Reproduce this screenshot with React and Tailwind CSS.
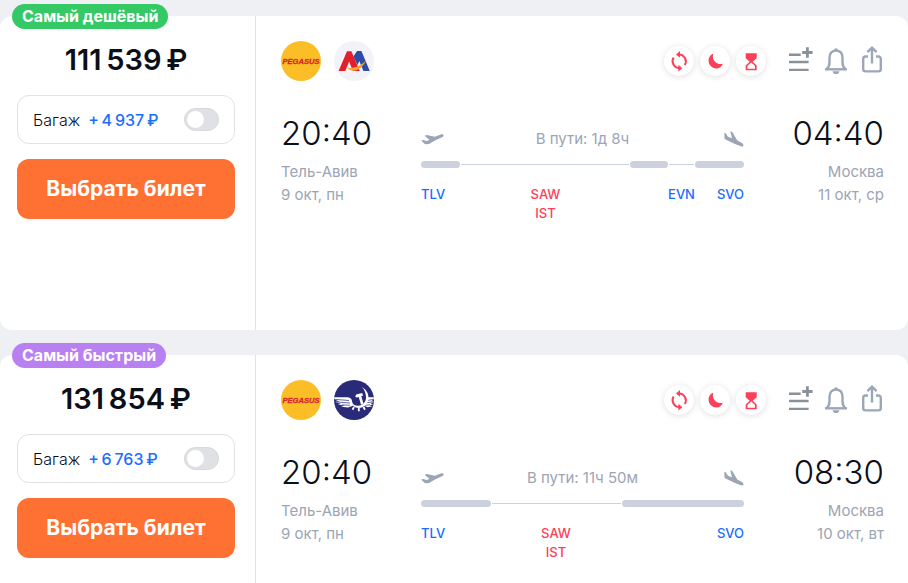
import React, { useState } from 'react';

const tickets = [
  {
    id: 'cheapest',
    label: 'Самый дешёвый',
    labelColor: 'bg-[#35c966]',
    price: '111\u2009539\u2009₽',
    baggage: '+\u20094\u2009937\u2009₽',
    airlines: ['pegasus', 'armenian'],
    from: { time: '20:40', city: 'Тель-Авив', date: '9 окт, пн' },
    to: { time: '04:40', city: 'Москва', date: '11 окт, ср' },
    duration: 'В пути: 1д 8ч',
    // flights and layovers alternate, weight is the share of the whole trip
    legs: [
      { type: 'flight', weight: 39, codes: ['TLV'], align: 'start' },
      { type: 'stop', weight: 171, codes: ['SAW', 'IST'], change: true },
      { type: 'flight', weight: 38 },
      { type: 'stop', weight: 25, codes: ['EVN'] },
      { type: 'flight', weight: 50, codes: ['SVO'], align: 'end' },
    ],
  },
  {
    id: 'fastest',
    label: 'Самый быстрый',
    labelColor: 'bg-[#b980f2]',
    price: '131\u2009854\u2009₽',
    baggage: '+\u20096\u2009763\u2009₽',
    airlines: ['pegasus', 'aeroflot'],
    from: { time: '20:40', city: 'Тель-Авив', date: '9 окт, пн' },
    to: { time: '08:30', city: 'Москва', date: '10 окт, вт' },
    duration: 'В пути: 11ч 50м',
    legs: [
      { type: 'flight', weight: 70, codes: ['TLV'], align: 'start' },
      { type: 'stop', weight: 130, codes: ['SAW', 'IST'], change: true },
      { type: 'flight', weight: 123, codes: ['SVO'], align: 'end' },
    ],
  },
];

const App = () => (
  <div className="min-h-screen bg-[#eff0f4] pt-4 pb-6 font-['Inter',sans-serif] text-[#0b0f19]">
    <main className="flex flex-col gap-[25px]">
      {tickets.map((ticket) => (
        <TicketCard key={ticket.id} ticket={ticket} />
      ))}
    </main>
  </div>
);

const TicketCard = ({ ticket }) => {
  const [withBaggage, setWithBaggage] = useState(false);

  return (
    <article className="relative flex min-h-[314px] rounded-xl bg-white">
      <span className={`absolute -top-3 left-3 rounded-full px-[10px] text-base leading-[25px] font-bold text-white ${ticket.labelColor}`}>
        {ticket.label}
      </span>

      {/* Price and purchase */}
      <div className="w-64 shrink-0 border-r border-[#dfe2e6] pt-6 pr-5 pl-[17px]">
        <div className="text-center text-[29px] leading-10 font-semibold">{ticket.price}</div>
        <label className="mt-[15px] flex h-[49px] items-center justify-between rounded-xl border border-[#e0e2e5] px-[15px] text-base">
          <span className="flex gap-2 leading-6">
            <span className="font-light">Багаж</span>
            <span className="font-medium text-[#1a6dff]">{ticket.baggage}</span>
          </span>
          <input
            type="checkbox"
            checked={withBaggage}
            onChange={(e) => setWithBaggage(e.target.checked)}
            className="flex h-[23px] w-[35px] appearance-none items-center rounded-full border border-[#d5d8dc] bg-[#dfe1e5] px-[2px] before:size-[17px] before:rounded-full before:bg-white checked:justify-end checked:bg-[#1a6dff]"
          />
        </label>
        <button className="mt-[15px] h-[60px] w-full rounded-xl bg-[#ff7033] text-[21px] font-bold text-white">
          Выбрать билет
        </button>
      </div>

      {/* Flight details */}
      <div className="min-w-0 flex-1 pt-[25px] pr-6 pl-[25px]">
        <div className="flex items-center justify-between">
          <div className="flex gap-[13px]">
            {ticket.airlines.map((airline) => (
              <AirlineLogo key={airline} name={airline} />
            ))}
          </div>
          <div className="flex items-center">
            <div className="mr-[22px] flex gap-[6px]">
              <Warning><ChangeIcon /></Warning>
              <Warning><MoonIcon /></Warning>
              <Warning><HourglassIcon /></Warning>
            </div>
            <div className="flex gap-3">
              <IconButton label="Добавить в список"><ListPlusIcon /></IconButton>
              <IconButton label="Следить за ценой"><BellIcon /></IconButton>
              <IconButton label="Поделиться"><ShareIcon /></IconButton>
            </div>
          </div>
        </div>

        <div className="mt-[30px] flex">
          <Endpoint point={ticket.from} />
          <Route duration={ticket.duration} legs={ticket.legs} />
          <Endpoint point={ticket.to} right />
        </div>
      </div>
    </article>
  );
};

const Endpoint = ({ point, right }) => (
  <div className={`w-[140px] shrink-0 ${right ? 'text-right' : ''}`}>
    <div className="text-[33px] leading-11 font-light">{point.time}</div>
    <div className="mt-[5px] text-[15px] leading-[23px] text-[#9ba5b4]">
      <div>{point.city}</div>
      <div>{point.date}</div>
    </div>
  </div>
);

const Route = ({ duration, legs }) => (
  <div className="min-w-0 flex-1 pt-4">
    <div className="flex h-6 items-center justify-between text-[15px] text-[#9ba5b4]">
      <TakeoffIcon />
      <span>{duration}</span>
      <LandingIcon />
    </div>
    <div className="mt-[10px] flex h-[7px] items-center">
      {legs.map((leg, i) => (
        <div
          key={i}
          className={leg.type === 'flight' ? 'h-[7px] rounded-full bg-[#ccd2dd]' : 'h-px border-x border-white bg-[#ccd2dd]'}
          style={{ flex: `${leg.weight} 1 0px` }}
        />
      ))}
    </div>
    <div className="mt-[17px] flex text-[13px] leading-[19px] font-medium">
      {legs.map((leg, i) => (
        <div
          key={i}
          className={`flex min-w-0 flex-col ${leg.align === 'start' ? 'items-start' : leg.align === 'end' ? 'items-end' : 'items-center'} ${leg.change ? 'text-[#fb4058]' : 'text-[#1a6dff]'}`}
          style={{ flex: `${leg.weight} 1 0px` }}
        >
          {leg.codes?.map((code) => <span key={code}>{code}</span>)}
        </div>
      ))}
    </div>
  </div>
);

const Warning = ({ children }) => (
  <span className="flex size-[30px] items-center justify-center rounded-full bg-white text-[#fb4058] shadow-[0_1px_6px_rgba(0,0,0,0.13)]">
    {children}
  </span>
);

const IconButton = ({ label, children }) => (
  <button aria-label={label} className="flex size-6 items-center justify-center text-[#9ba7b7]">
    {children}
  </button>
);

const ChangeIcon = () => (
  <svg className="size-[30px]" viewBox="0 0 30 30" fill="none" stroke="currentColor" strokeWidth="2">
    <path d="M15 8.4a7 7 0 0 1 5.8 10.6" />
    <path d="M15.4 22.2a7 7 0 0 1-5.8-10.6" />
    <path d="M16 5v6.8L12 8.4zM14.4 18.8v6.8l4-3.4z" fill="currentColor" stroke="none" />
  </svg>
);

const MoonIcon = () => (
  <svg className="size-[30px]" viewBox="0 0 30 30" fill="currentColor">
    <path d="M13.3 7.7C9.5 9 8.3 12.5 8.7 15.7c.5 3.8 3.8 6.7 7.6 6.7 3.1 0 5.5-1.7 6.5-4.7-2.4.8-5.3.4-7.5-1.7-2.3-2.2-3-5.3-2-8.3z" />
  </svg>
);

const HourglassIcon = () => (
  <svg className="size-[30px]" viewBox="0 0 30 30">
    <path d="M9.7 7.3h11v4.9l-4 3.6 4 3.7v4.7h-11v-4.7l4-3.7-4-3.6z" fill="currentColor" />
    <path d="M15.2 16.6l-3.8 3.5v2.7H19v-2.7z" fill="white" />
  </svg>
);

const ListPlusIcon = () => (
  <svg className="size-[30px] shrink-0" viewBox="0 0 30 30" fill="none" stroke="#8a9299" strokeWidth="2.4">
    <path d="M4 8.8h11.7M4 16h19.6M4 23.9h19.6" />
    <path d="M22.400 1.300v10.400M17.200 6.500h10.400" strokeWidth="2.800" />
  </svg>
);

const BellIcon = () => (
  <svg className="size-[30px] shrink-0" viewBox="0 0 30 30" fill="none" stroke="currentColor" strokeWidth="2.4">
    <path d="M5.600 23.200c2.200-2 2.900-3.600 2.900-7v-4.400c0-4.400 2.400-7.200 6.500-7.200s6.500 2.800 6.500 7.200v4.400c0 3.400.7 5 2.900 7" />
    <path d="M4 23.300h22" />
    <path d="M13 4.200a2 2 0 0 1 4 0zM11.500 25.200h7c-.5 1.900-1.700 2.900-3.500 2.900s-3-1-3.500-2.900z" fill="currentColor" stroke="none" />
  </svg>
);

const ShareIcon = () => (
  <svg className="size-[30px] shrink-0" viewBox="0 0 30 30" fill="none" stroke="currentColor" strokeWidth="2.4">
    <path d="M11 10.500H8.600a2.400 2.400 0 0 0-2.400 2.400V23a2.400 2.400 0 0 0 2.400 2.400h12.800a2.400 2.400 0 0 0 2.400-2.400V12.900a2.400 2.400 0 0 0-2.400-2.400H19" />
    <path d="M15 17.500V2M10.400 6.200L15 1.700l4.600 4.500" />
  </svg>
);

const TakeoffIcon = () => (
  <svg className="h-3 w-6" viewBox="0 0 24 12" fill="currentColor">
    <path d="M.2 7.400l2.300-.3 2.800.9L8.600 6.900 3.600 2.800l2.300-.7 7.900 1.700 6-2.300c1.600-.5 2.800-.1 2.800.9 0 .9-.6 1.400-1.600 1.900l-7 3.200-6 3.500-3 .3C3.300 10.900 2.200 9.500.2 7.400z" />
  </svg>
);

const LandingIcon = () => (
  <svg className="h-[17px] w-6" viewBox="0 0 24 17" fill="currentColor">
    <path d="M4.400 1.800l1.300.4 2.200 3.500 4.100 1.500L10.300.3l2 .6 5 8.700 4.300 2.200c1.500.9 2 1.800 1.800 3-.3.900-1.300.900-2.400.500L15 12.900 5.600 8.400c-1-.6-1.200-1-1.200-1.900z" />
  </svg>
);

const AirlineLogo = ({ name }) => {
  if (name === 'pegasus') {
    return (
      <svg className="size-10" viewBox="0 0 40 40" role="img" aria-label="Pegasus">
        <circle cx="20" cy="20" r="20" fill="#fcbe27" />
        <text x="20" y="22.8" textAnchor="middle" fontFamily="Liberation Sans, sans-serif" fontSize="7.6" fontWeight="bold" fontStyle="italic" fill="#d9252a" stroke="#d9252a" strokeWidth=".3">
          PEGASUS
        </text>
      </svg>
    );
  }

  if (name === 'armenian') {
    return (
      <svg className="size-10" viewBox="0 0 40 40" role="img" aria-label="Armenian Airlines">
        <circle cx="20" cy="20" r="20" fill="#f2f2f8" />
        <path d="M19.400 15.500l3.600-5.500h4.400L35.800 30h-6.400L25.300 20l-1.800 4z" fill="#2c4da6" />
        <path d="M4.600 30L13 10.300h4.400L25.800 30h-6.900l-3.800-9.500L11.300 30z" fill="#e2202c" />
        <path d="M13.300 26.600c5 1 12.500-.5 18.500-6.800-2.500 6-7.500 9.900-12.500 9.900-2.800 0-4.800-1.200-6-3.100z" fill="#f6a531" />
      </svg>
    );
  }

  return (
    <svg className="size-10 rounded-full" viewBox="0 0 40 40" role="img" aria-label="Aeroflot">
      <rect width="40" height="40" fill="#2a2b78" />
      {/* wings */}
      <path d="M0 17.300h13c3 0 4.500 1.200 5 3.500l1 5-5 1.700-7-.8 3.500-1-7-1.500 3.500-.3-6-2.200h4.500L0 19.300z" fill="white" />
      <path d="M40 17.300h-6c-1.500 0-2.500 1-3 3l-1.500 5 4 2 5-1-3-.8 4-1.500-3-.3 3.500-2.200h-3l3-2.200z" fill="white" />
      <path d="M0 19.300l15 1.200M3 22l13 1M8 24.800l8 .5M40 19.300l-7 1.200M38 22l-7 1M36 24.800l-5 .5" stroke="#2a2b78" strokeWidth=".7" />
      {/* hammer and sickle */}
      <circle cx="25.300" cy="18.500" r="7.400" fill="#2a2b78" />
      <path d="M17 20.500c1 3.500 4 5.500 7.500 5.300 4.200-.3 7.500-3.700 7.500-8.300 0-3.800-1.200-7.500-4.200-10.500 4 2.200 6.700 6 6.700 10.700 0 5.800-4.200 10.300-9.800 10.300-4.200 0-7.200-3-7.700-7.500z" fill="white" />
      <path d="M21.200 16.800l1-2.400 6-1.500.8 2.900-1.700.5 2.300 7.800-2.600.7-2.300-7.800-2 .6z" fill="white" />
      <path d="M20 27l-1.500 2.700M24.800 28v3.200M29.500 27l1.500 2.700" stroke="white" strokeWidth="1.800" />
    </svg>
  );
};

export default App;
